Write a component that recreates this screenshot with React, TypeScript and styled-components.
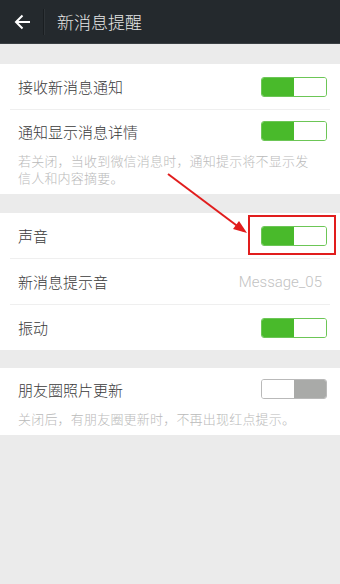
import React from "react";
import styled, { createGlobalStyle } from "styled-components";

const Global = createGlobalStyle`
  html, body {
    margin: 0;
    padding: 0;
    background: #ebebeb;
  }
  body {
    font-family: "Noto Sans CJK SC", "Noto Sans", sans-serif;
  }
  * { box-sizing: border-box; }
`;

const Page = styled.div`
  position: relative;
  width: 340px;
  min-height: 584px;
  background: #ebebeb;
  display: flex;
  flex-direction: column;
`;

const Header = styled.header`
  height: 44px;
  background: #24292d;
  display: flex;
  align-items: center;
  border-bottom: 1px solid #3a3f43;
`;

const BackButton = styled.div`
  width: 43px;
  height: 100%;
  display: flex;
  align-items: center;
  padding-left: 14px;
`;

const HeaderDivider = styled.div`
  width: 1px;
  height: 26px;
  background: #1a1e21;
  box-shadow: 1px 0 0 #2f3438;
`;

const Title = styled.h1`
  margin: 0 0 0 13px;
  font-size: 17px;
  font-weight: 300;
  color: #e6e6e6;
  letter-spacing: 0;
`;

const Section = styled.section<{ $top: number }>`
  margin-top: ${(p) => p.$top}px;
  background: #ffffff;
  display: flex;
  flex-direction: column;
`;

const Row = styled.div<{ $h: number }>`
  height: ${(p) => p.$h}px;
  display: flex;
  align-items: center;
  justify-content: space-between;
  padding: 0 13px 0 18px;
`;

const Label = styled.span`
  font-size: 15px;
  font-weight: 300;
  color: #3a3a3a;
`;

const Value = styled.span`
  font-family: Roboto, "Liberation Sans", sans-serif;
  font-size: 15px;
  font-weight: 300;
  color: #c2c2c2;
  padding-right: 5px;
`;

const Separator = styled.div`
  height: 1px;
  margin: 0 10px;
  background: #efefef;
`;

const Desc = styled.p`
  margin: 0;
  padding: 0 28px 8px 18px;
  font-size: 13px;
  font-weight: 300;
  letter-spacing: 0.2px;
  line-height: 17px;
  color: #bababa;
`;

const ToggleBox = styled.div<{ $on: boolean }>`
  width: 66px;
  height: 20px;
  border-radius: 3px;
  border: 1px solid ${(p) => (p.$on ? "#6cc656" : "#b9b9b9")};
  display: flex;
  overflow: hidden;
  background: #fff;
`;

const ToggleHalf = styled.div<{ $fill: string }>`
  flex: 1;
  background: ${(p) => p.$fill};
`;

const Toggle: React.FC<{ on: boolean }> = ({ on }) => (
  <ToggleBox $on={on}>
    <ToggleHalf $fill={on ? "#49ba2b" : "#ffffff"} />
    <ToggleHalf $fill={on ? "#ffffff" : "#a9aaa8"} />
  </ToggleBox>
);

const Highlight = styled.div`
  position: absolute;
  left: 248px;
  top: 215px;
  width: 88px;
  height: 40px;
  border: 2px solid #e11d1d;
`;

const ArrowOverlay = styled.svg`
  position: absolute;
  left: 0;
  top: 0;
  pointer-events: none;
`;

export default function App() {
  return (
    <Page>
      <Global />
      <Header>
        <BackButton>
          <svg width="17" height="16" viewBox="0 0 17 16">
            <path
              d="M16 8H2M8.5 1.5L2 8l6.5 6.5"
              stroke="#ffffff"
              strokeWidth="2"
              fill="none"
            />
          </svg>
        </BackButton>
        <HeaderDivider />
        <Title>新消息提醒</Title>
      </Header>

      <Section $top={20}>
        <Row $h={45}>
          <Label>接收新消息通知</Label>
          <Toggle on />
        </Row>
        <Separator />
        <Row $h={42}>
          <Label>通知显示消息详情</Label>
          <Toggle on />
        </Row>
        <Desc>若关闭，当收到微信消息时，通知提示将不显示发信人和内容摘要。</Desc>
      </Section>

      <Section $top={19}>
        <Row $h={45}>
          <Label>声音</Label>
          <Toggle on />
        </Row>
        <Separator />
        <Row $h={45}>
          <Label>新消息提示音</Label>
          <Value>Message_05</Value>
        </Row>
        <Separator />
        <Row $h={45}>
          <Label>振动</Label>
          <Toggle on />
        </Row>
      </Section>

      <Section $top={18}>
        <Row $h={42}>
          <Label>朋友圈照片更新</Label>
          <Toggle on={false} />
        </Row>
        <Desc>关闭后，有朋友圈更新时，不再出现红点提示。</Desc>
      </Section>

      <Highlight />
      <ArrowOverlay width="340" height="584" viewBox="0 0 340 584">
        <line x1="168" y1="174" x2="244" y2="231" stroke="#e11d1d" strokeWidth="2" />
        <path d="M247 233 L233 229 L239 221 Z" fill="#e11d1d" />
      </ArrowOverlay>
    </Page>
  );
}
